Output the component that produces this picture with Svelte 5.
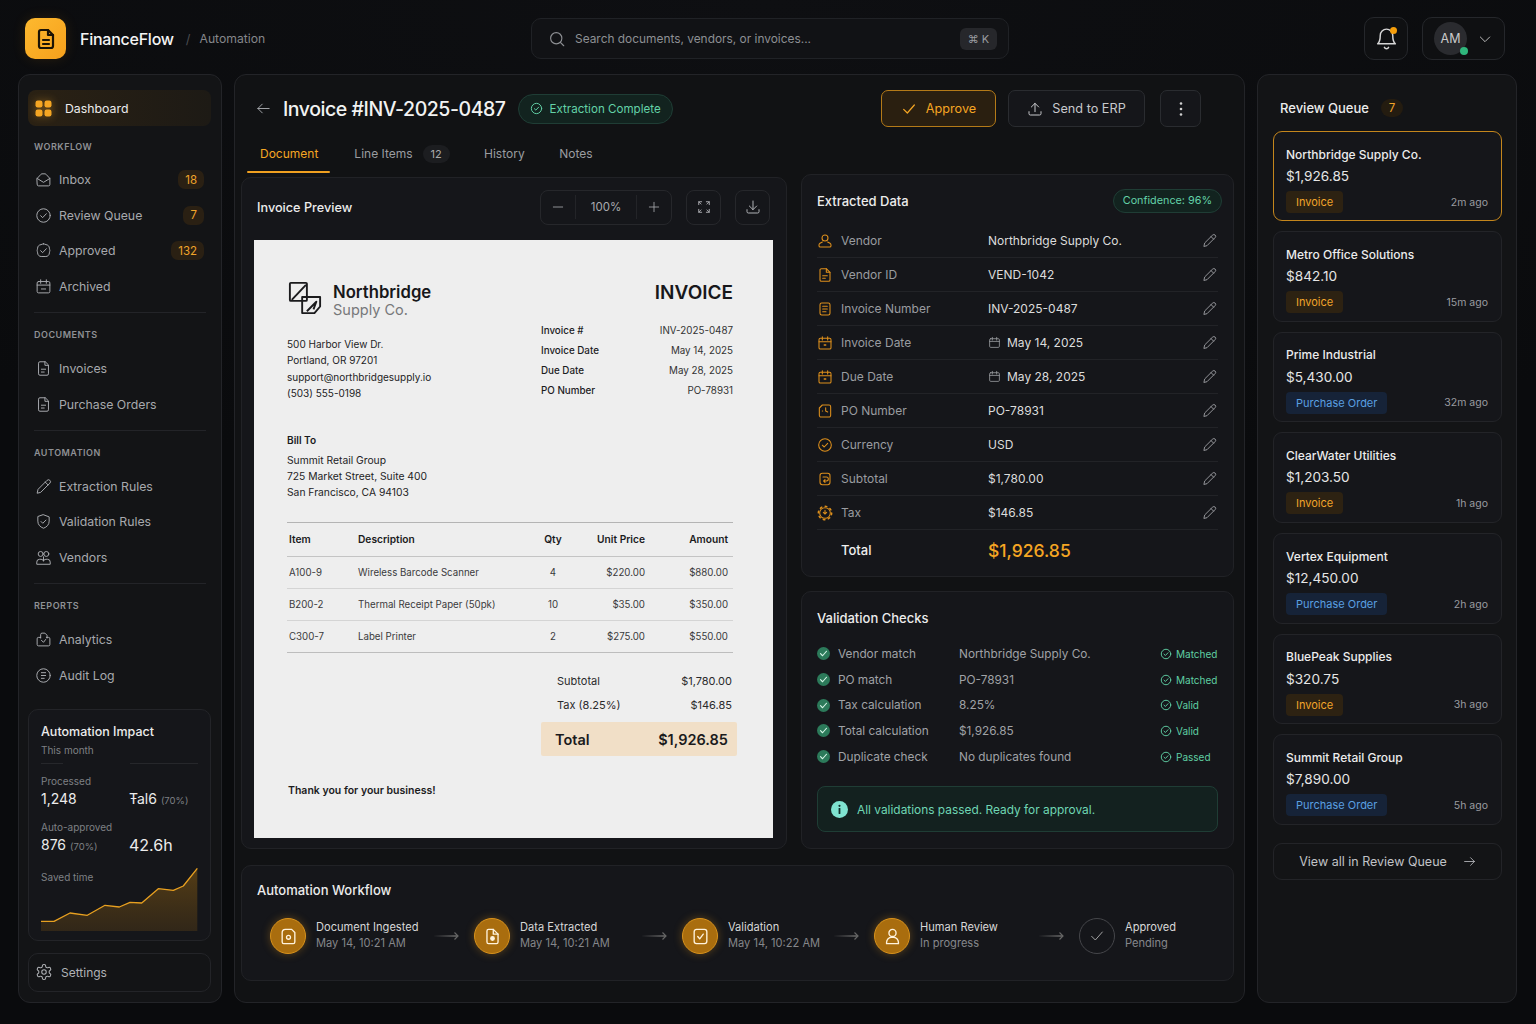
<script lang="ts">
  const icons: Record<string, string> = {
    doc: '<path d="M14 3H7a2 2 0 0 0-2 2v14a2 2 0 0 0 2 2h10a2 2 0 0 0 2-2V8z"/><path d="M14 3v5h5"/><path d="M9 13h6M9 17h6"/>',
    inbox: '<path d="M3 10.5 8.5 4.6a2 2 0 0 1 1.4-.6h4.200a2 2 0 0 1 1.400.6L21 10.500V19a2 2 0 0 1-2 2H5a2 2 0 0 1-2-2z"/><path d="m3 10.500 9 5.500 9-5.500"/>',
    circleCheck: '<circle cx="12" cy="12" r="9.500"/><path d="m8 12.300 2.800 2.700L16 9.500"/>',
    badge: '<path d="M12 2.500c1.500 0 2 1 3.500 1.200 2.800.3 4.800 2.300 4.800 5 0 1.400.7 2 .7 3.300s-.7 2-.7 3.300c0 3-2.300 5.200-5 5.200H8.700c-2.700 0-5-2.200-5-5.200 0-1.300-.7-2-.7-3.300s.7-1.900.7-3.300c0-2.700 2-4.700 4.800-5C10 3.500 10.500 2.500 12 2.500z"/><path d="m8 12.300 2.800 2.700L16 9.500"/>',
    calendar: '<rect x="3" y="5" width="18" height="16" rx="2"/><path d="M8 2.500v5M16 2.500v5M3 10h18"/>',
    calDot: '<rect x="3" y="5" width="18" height="16" rx="2"/><path d="M8 2.500v5M16 2.500v5M3 10h18"/><path d="M11 15h2" stroke-width="2.400"/>',
    archive: '<rect x="3" y="5" width="18" height="16" rx="2"/><path d="M8 2.500v5M16 2.500v5M3 10h18M9 15.500h6"/>',
    file: '<path d="M14 2.500H7a2 2 0 0 0-2 2v15a2 2 0 0 0 2 2h10a2 2 0 0 0 2-2V7.500z"/><path d="M14 2.500v5h5"/><path d="M9 13h6M9 17h4"/>',
    lines: '<rect x="4.500" y="3" width="15" height="18" rx="2.500"/><path d="M8.500 8h7M8.500 12h7M8.500 16h5"/>',
    pencil: '<path d="M17 3.300a2.800 2.800 0 0 1 4 4L8 20.300 3 21.500l1.200-5z"/><path d="m14.500 5.800 4 4"/>',
    shield: '<path d="M12 2.500 20 5.500v6c0 5-3.400 8.300-8 10-4.600-1.700-8-5-8-10v-6z"/><path d="m8.500 12 2.500 2.500 4.500-4.500"/>',
    users: '<circle cx="8" cy="7" r="3.500"/><circle cx="16" cy="7" r="3.500"/><path d="M2.500 21v-2.500a4 4 0 0 1 4-4h2a3.500 3.500 0 0 1 3.500 2.500 3.500 3.500 0 0 1 3.500-2.500h2a4 4 0 0 1 4 4V21z"/><path d="M12 11v6"/>',
    analytics: '<path d="M8 10V5a2 2 0 0 1 2-2h4l3 3v4"/><path d="M8 9H5a2 2 0 0 0-2 2v8a2 2 0 0 0 2 2h14a2 2 0 0 0 2-2v-8a2 2 0 0 0-2-2h-3"/><path d="m9 13 3 3 3-4"/>',
    audit: '<circle cx="12" cy="12" r="9.500"/><path d="M9 8h6M9 12h6M9 16h4"/>',
    gear: '<path d="M12.220 2h-.44a2 2 0 0 0-2 2v.18a2 2 0 0 1-1 1.730l-.43.25a2 2 0 0 1-2 0l-.15-.08a2 2 0 0 0-2.730.73l-.22.38a2 2 0 0 0 .73 2.730l.15.1a2 2 0 0 1 1 1.720v.51a2 2 0 0 1-1 1.740l-.15.09a2 2 0 0 0-.73 2.730l.22.38a2 2 0 0 0 2.730.73l.15-.08a2 2 0 0 1 2 0l.43.25a2 2 0 0 1 1 1.730V20a2 2 0 0 0 2 2h.44a2 2 0 0 0 2-2v-.18a2 2 0 0 1 1-1.730l.43-.25a2 2 0 0 1 2 0l.15.08a2 2 0 0 0 2.730-.73l.22-.39a2 2 0 0 0-.73-2.730l-.15-.08a2 2 0 0 1-1-1.740v-.5a2 2 0 0 1 1-1.740l.15-.09a2 2 0 0 0 .73-2.730l-.22-.38a2 2 0 0 0-2.730-.73l-.15.08a2 2 0 0 1-2 0l-.43-.25a2 2 0 0 1-1-1.730V4a2 2 0 0 0-2-2z"/><circle cx="12" cy="12" r="3"/>',
    search: '<circle cx="11" cy="11" r="7.500"/><path d="m21 21-4.500-4.500"/>',
    bell: '<path d="M6 9a6 6 0 0 1 12 0c0 6 2.500 8 2.500 8h-17S6 15 6 9"/><path d="M10 20.500a2.200 2.200 0 0 0 4 0"/>',
    chevron: '<path d="m5 9 7 7 7-7"/>',
    arrowLeft: '<path d="M21 12H3M10 5l-7 7 7 7"/>',
    arrowRight: '<path d="M3 12h18M14 5l7 7-7 7"/>',
    check: '<path d="m4 12.500 5.500 5.500L20 6"/>',
    upload: '<path d="M12 16V3.500M6.500 9 12 3.500 17.500 9M3 16v3a2 2 0 0 0 2 2h14a2 2 0 0 0 2-2v-3"/>',
    download: '<path d="M12 3v13M6.500 10.500 12 16l5.500-5.500M3 16v3a2 2 0 0 0 2 2h14a2 2 0 0 0 2-2v-3"/>',
    minus: '<path d="M4 12h16"/>',
    plus: '<path d="M12 4v16M4 12h16"/>',
    expand: '<path d="M3 8V3h5M16 3h5v5M21 16v5h-5M8 21H3v-5"/><path d="m3 3 4 4M21 3l-4 4M21 21l-4-4M3 21l4-4" stroke-width="1.400"/>',
    po: '<path d="M8 3h10a2.500 2.500 0 0 1 2.500 2.500v13a2.500 2.500 0 0 1-2.500 2.500H6a2.500 2.500 0 0 1-2.500-2.500V7.500z"/><path d="M13 7v5l3 1.500M8 12h.5"/>',
    sub: '<rect x="4.500" y="3.500" width="15" height="17" rx="3.500"/><path d="M9 9h5a2 2 0 0 1 0 6h-3M12 13l-2 2 2 2"/>',
    tax: '<circle cx="12" cy="12" r="8" /><circle cx="12" cy="12" r="10" stroke-dasharray="2.500 5.350" stroke-width="2.200"/><path d="M12 8v5M9.500 11l2.500 2.500 2.500-2.500"/>',
    vendor: '<circle cx="12" cy="7.500" r="4.500"/><path d="M8 13.500 4.500 15.500A3 3 0 0 0 3 18v1a2 2 0 0 0 2 2h14a2 2 0 0 0 2-2v-1a3 3 0 0 0-1.500-2.500L16 13.500"/>',
    vendorId: '<path d="M14 2.500H6.500a2 2 0 0 0-2 2v15a2 2 0 0 0 2 2h11a2 2 0 0 0 2-2V8z"/><path d="M14 2.500V8h5.500"/><path d="M8.500 13h7M8.500 17h4"/>',
    ingest: '<path d="M8 3h8l4 4v12a2 2 0 0 1-2 2H6a2 2 0 0 1-2-2V7a4 4 0 0 1 4-4z"/><circle cx="12" cy="13" r="2.500"/>',
    extract: '<path d="M13 3H7a2 2 0 0 0-2 2v14a2 2 0 0 0 2 2h10a2 2 0 0 0 2-2V9z"/><path d="M13 3v6h6"/><circle cx="12" cy="14.500" r="2.200" fill="currentColor"/>',
    validate: '<rect x="4" y="3" width="16" height="18" rx="3"/><path d="m8.500 12 2.500 3 4.500-6"/>',
    person: '<circle cx="12" cy="7.500" r="4.500"/><path d="M4.500 21v-1.500a6.500 6.500 0 0 1 6.500-6.500h2a6.500 6.500 0 0 1 6.500 6.500V21z"/>',
  };

  const sections = [
    {
      label: 'WORKFLOW',
      items: [
        { name: 'Inbox', icon: 'inbox', count: 18 },
        { name: 'Review Queue', icon: 'circleCheck', count: 7 },
        { name: 'Approved', icon: 'badge', count: 132 },
        { name: 'Archived', icon: 'archive' },
      ],
    },
    { label: 'DOCUMENTS', items: [{ name: 'Invoices', icon: 'file' }, { name: 'Purchase Orders', icon: 'file' }] },
    {
      label: 'AUTOMATION',
      items: [
        { name: 'Extraction Rules', icon: 'pencil' },
        { name: 'Validation Rules', icon: 'shield' },
        { name: 'Vendors', icon: 'users' },
      ],
    },
    { label: 'REPORTS', items: [{ name: 'Analytics', icon: 'analytics' }, { name: 'Audit Log', icon: 'audit' }] },
  ];

  const fields = [
    { label: 'Vendor', value: 'Northbridge Supply Co.', icon: 'vendor' },
    { label: 'Vendor ID', value: 'VEND-1042', icon: 'vendorId' },
    { label: 'Invoice Number', value: 'INV-2025-0487', icon: 'lines' },
    { label: 'Invoice Date', value: 'May 14, 2025', icon: 'calDot', date: true },
    { label: 'Due Date', value: 'May 28, 2025', icon: 'calDot', date: true },
    { label: 'PO Number', value: 'PO-78931', icon: 'po' },
    { label: 'Currency', value: 'USD', icon: 'circleCheck' },
    { label: 'Subtotal', value: '$1,780.00', icon: 'sub' },
    { label: 'Tax', value: '$146.85', icon: 'tax' },
  ];

  const checks = [
    ['Vendor match', 'Northbridge Supply Co.', 'Matched'],
    ['PO match', 'PO-78931', 'Matched'],
    ['Tax calculation', '8.25%', 'Valid'],
    ['Total calculation', '$1,926.85', 'Valid'],
    ['Duplicate check', 'No duplicates found', 'Passed'],
  ];

  const lineItems = [
    ['A100-9', 'Wireless Barcode Scanner', '4', '$220.00', '$880.00'],
    ['B200-2', 'Thermal Receipt Paper (50pk)', '10', '$35.00', '$350.00'],
    ['C300-7', 'Label Printer', '2', '$275.00', '$550.00'],
  ];

  const meta = [
    ['Invoice #', 'INV-2025-0487'],
    ['Invoice Date', 'May 14, 2025'],
    ['Due Date', 'May 28, 2025'],
    ['PO Number', 'PO-78931'],
  ];

  const steps = [
    { title: 'Document Ingested', sub: 'May 14, 10:21 AM', icon: 'ingest', w: 204 },
    { title: 'Data Extracted', sub: 'May 14, 10:21 AM', icon: 'extract', w: 208 },
    { title: 'Validation', sub: 'May 14, 10:22 AM', icon: 'validate', w: 192 },
    { title: 'Human Review', sub: 'In progress', icon: 'person', w: 205 },
    { title: 'Approved', sub: 'Pending', icon: 'check', pending: true, w: 130 },
  ];

  const queue = [
    { name: 'Northbridge Supply Co.', amount: '$1,926.85', type: 'Invoice', time: '2m ago', active: true },
    { name: 'Metro Office Solutions', amount: '$842.10', type: 'Invoice', time: '15m ago' },
    { name: 'Prime Industrial', amount: '$5,430.00', type: 'Purchase Order', time: '32m ago' },
    { name: 'ClearWater Utilities', amount: '$1,203.50', type: 'Invoice', time: '1h ago' },
    { name: 'Vertex Equipment', amount: '$12,450.00', type: 'Purchase Order', time: '2h ago' },
    { name: 'BluePeak Supplies', amount: '$320.75', type: 'Invoice', time: '3h ago' },
    { name: 'Summit Retail Group', amount: '$7,890.00', type: 'Purchase Order', time: '5h ago' },
  ];

  // sparkline, in px of the 157x65 box
  const spark = [
    [0, 54.3], [13, 54.3], [29, 46], [46.3, 48.3], [64, 38.3], [78.3, 40], [89, 35.3],
    [100.700, 36], [117.3, 21.7], [132.3, 23.3], [142.3, 19], [156.3, 1.3],
  ];
  const sparkLine = spark.map((p, i) => `${i === 0 ? 'M' : 'L'}${p[0]},${p[1]}`).join(' ');
  const sparkArea = `${sparkLine} L156.3,64 L0,64 Z`;
</script>

{#snippet ic(name: string, size: number = 16, sw: number = 1.7)}
  <svg class="ic" width={size} height={size} viewBox="0 0 24 24" fill="none" stroke="currentColor" stroke-width={sw} stroke-linecap="round" stroke-linejoin="round" aria-hidden="true">{@html icons[name]}</svg>
{/snippet}

<div class="app">
  <header class="topbar">
    <div class="brand">
      <div class="logo">{@render ic('doc', 24, 2.2)}</div>
      <span class="brand-name">FinanceFlow</span>
      <span class="slash">/</span>
      <span class="crumb">Automation</span>
    </div>
    <div class="search">
      {@render ic('search', 18, 1.5)}
      <span class="search-text">Search documents, vendors, or invoices...</span>
      <span class="kbd">⌘ K</span>
    </div>
    <div class="top-right">
      <button class="bell">
        {@render ic('bell', 25, 1.4)}
        <span class="bell-dot"></span>
      </button>
      <button class="profile">
        <span class="avatar">AM<span class="online"></span></span>
        {@render ic('chevron', 16, 1.5)}
      </button>
    </div>
  </header>

  <div class="layout">
    <aside class="sidebar">
      <div class="dash">
        <svg class="dash-ic" width="17" height="17" viewBox="0 0 17 17" aria-hidden="true">
          <rect x="0.500" y="0.500" width="7" height="7" rx="2.200" />
          <rect x="9.500" y="0.500" width="7" height="7" rx="2.200" />
          <rect x="0.500" y="9.500" width="7" height="7" rx="2.200" />
          <rect x="9.500" y="9.500" width="7" height="7" rx="2.200" />
        </svg>
        <span>Dashboard</span>
      </div>
      {#each sections as s, i}
        <div class="sec-label" class:first={i === 0}>{s.label}</div>
        {#each s.items as it}
          <div class="nav-item">
            {@render ic(it.icon, 17, 1.4)}
            <span>{it.name}</span>
            {#if it.count}<em class="count">{it.count}</em>{/if}
          </div>
        {/each}
        {#if i < sections.length - 1}<div class="nav-div"></div>{/if}
      {/each}

      <div class="impact">
        <div class="impact-title">Automation Impact</div>
        <div class="impact-sub">This month</div>
        <div class="impact-rule"><i></i><i></i></div>
        <div class="impact-grid">
          <div>
            <div class="stat-label">Processed</div>
            <div class="stat">1,248</div>
          </div>
          <div>
            <div class="stat-label">&nbsp;</div>
            <div class="stat">Ŧal6 <small>(70%)</small></div>
          </div>
          <div class="row2">
            <div class="stat-label">Auto-approved</div>
            <div class="stat">876 <small>(70%)</small></div>
          </div>
          <div class="row2">
            <div class="stat-label">&nbsp;</div>
            <div class="stat big">42.6h</div>
          </div>
        </div>
        <div class="chart">
          <span class="chart-label">Saved time</span>
          <svg width="157" height="65" viewBox="0 0 157 65" aria-hidden="true">
            <defs>
              <linearGradient id="sparkFill" x1="0" y1="0" x2="0" y2="1">
                <stop offset="0" stop-color="#8a5e12" stop-opacity="0.55" />
                <stop offset="1" stop-color="#5c4016" stop-opacity="0.4" />
              </linearGradient>
            </defs>
            <path d={sparkArea} fill="url(#sparkFill)" />
            <path d={sparkLine} fill="none" stroke="#e8a020" stroke-width="1.300" stroke-linejoin="round" />
          </svg>
        </div>
      </div>

      <div class="settings">
        {@render ic('gear', 18, 1.4)}
        <span>Settings</span>
      </div>
    </aside>

    <main class="main">
      <div class="head">
        <span class="back">{@render ic('arrowLeft', 15, 1.5)}</span>
        <h1>Invoice #INV-2025-0487</h1>
        <span class="status">{@render ic('circleCheck', 13, 1.8)}Extraction Complete</span>
        <div class="actions">
          <button class="btn approve">{@render ic('check', 16, 1.8)}Approve</button>
          <button class="btn send">{@render ic('upload', 16, 1.5)}Send to ERP</button>
          <button class="btn more" aria-label="More">
            <svg width="4" height="16" viewBox="0 0 4 16" aria-hidden="true"><circle cx="2" cy="2.500" r="1.300" /><circle cx="2" cy="8" r="1.300" /><circle cx="2" cy="13.500" r="1.300" /></svg>
          </button>
        </div>
      </div>

      <nav class="tabs">
        <span class="tab active">Document</span>
        <span class="tab">Line Items <em>12</em></span>
        <span class="tab">History</span>
        <span class="tab">Notes</span>
      </nav>

      <div class="columns">
        <section class="panel preview">
          <div class="preview-head">
            <h2>Invoice Preview</h2>
            <div class="zoom">
              <span class="zoom-btn">{@render ic('minus', 14, 1.4)}</span>
              <span class="zoom-val">100%</span>
              <span class="zoom-btn">{@render ic('plus', 14, 1.4)}</span>
            </div>
            <span class="tool fs">{@render ic('expand', 14, 1.6)}</span>
            <span class="tool">{@render ic('download', 16, 1.5)}</span>
          </div>

          <div class="paper">
            <div class="paper-top">
              <div>
                <div class="nb">
                  <svg class="nb-mark" width="34" height="34" viewBox="0 0 36 36" fill="none" stroke="#1b1b1d" stroke-width="2" stroke-linejoin="round" aria-hidden="true">
                    <rect x="2" y="2" width="18" height="19" rx="1" />
                    <path d="M4 20 19 4" />
                    <path d="M15 17v17h13l6-7V17z" />
                    <path d="M20 32 30 22l-3 8" />
                  </svg>
                  <div class="nb-text">
                    <div class="nb-1">Northbridge</div>
                    <div class="nb-2">Supply Co.</div>
                  </div>
                </div>
                <div class="addr">
                  <div>500 Harbor View Dr.</div>
                  <div>Portland, OR 97201</div>
                  <div>support@northbridgesupply.io</div>
                  <div>(503) 555-0198</div>
                </div>
              </div>
              <div>
                <div class="inv-word">INVOICE</div>
                <div class="meta">
                  {#each meta as m}
                    <div class="meta-row"><b>{m[0]}</b><span>{m[1]}</span></div>
                  {/each}
                </div>
              </div>
            </div>

            <div class="bill-label">Bill To</div>
            <div class="bill">
              <div>Summit Retail Group</div>
              <div>725 Market Street, Suite 400</div>
              <div>San Francisco, CA 94103</div>
            </div>

            <table>
              <thead>
                <tr>
                  <th class="c-item">Item</th>
                  <th class="c-desc">Description</th>
                  <th class="c-qty">Qty</th>
                  <th class="c-price">Unit Price</th>
                  <th class="c-amt">Amount</th>
                </tr>
              </thead>
              <tbody>
                {#each lineItems as r}
                  <tr>
                    <td class="c-item">{r[0]}</td>
                    <td class="c-desc">{r[1]}</td>
                    <td class="c-qty">{r[2]}</td>
                    <td class="c-price">{r[3]}</td>
                    <td class="c-amt">{r[4]}</td>
                  </tr>
                {/each}
              </tbody>
            </table>

            <div class="totals">
              <div class="t-row"><span>Subtotal</span><span>$1,780.00</span></div>
              <div class="t-row"><span>Tax (8.25%)</span><span>$146.85</span></div>
              <div class="t-total"><span>Total</span><span>$1,926.85</span></div>
            </div>
            <div class="thanks">Thank you for your business!</div>
          </div>
        </section>

        <div class="right-col">
          <section class="panel extracted">
            <div class="ex-head">
              <h2>Extracted Data</h2>
              <span class="conf">Confidence: 96%</span>
            </div>
            {#each fields as f}
              <div class="field">
                <span class="f-ic">{@render ic(f.icon, 16, 1.6)}</span>
                <span class="f-label">{f.label}</span>
                <span class="f-value">
                  {#if f.date}<span class="f-cal">{@render ic('calendar', 13, 1.5)}</span>{/if}
                  {f.value}
                </span>
                <span class="f-edit">{@render ic('pencil', 15, 1.4)}</span>
              </div>
            {/each}
            <div class="field total">
              <span class="f-ic"></span>
              <span class="f-label">Total</span>
              <span class="f-value">$1,926.85</span>
            </div>
          </section>

          <section class="panel validation">
            <h2>Validation Checks</h2>
            <div class="checks">
              {#each checks as c}
                <div class="check">
                  <span class="c-dot">{@render ic('check', 9, 3)}</span>
                  <span class="c-label">{c[0]}</span>
                  <span class="c-value">{c[1]}</span>
                  <span class="c-status">{@render ic('circleCheck', 12, 1.9)}{c[2]}</span>
                </div>
              {/each}
            </div>
            <div class="passed">
              <svg width="17" height="17" viewBox="0 0 17 17" aria-hidden="true">
                <circle cx="8.500" cy="8.500" r="8.500" fill="#7fe3d0" />
                <rect x="7.600" y="7" width="1.800" height="6" rx="0.600" fill="#12312c" />
                <circle cx="8.500" cy="4.800" r="1.100" fill="#12312c" />
              </svg>
              All validations passed. Ready for approval.
            </div>
          </section>
        </div>
      </div>

      <section class="panel workflow">
        <h2>Automation Workflow</h2>
        <div class="steps">
          {#each steps as s, i}
            <div class="step" style="width:{s.w}px">
              <span class="step-ic" class:pending={s.pending}>{@render ic(s.icon, s.pending ? 16 : 19, s.pending ? 1.3 : 1.7)}</span>
              <div class="step-text">
                <div class="step-title">{s.title}</div>
                <div class="step-sub">{s.sub}</div>
              </div>
              {#if i < steps.length - 1}
                <svg class="flow-arrow" width="26" height="10" viewBox="0 0 26 10" fill="none" aria-hidden="true">
                  <defs>
                    <linearGradient id="flowFade{i}" gradientUnits="userSpaceOnUse" x1="0" y1="0" x2="26" y2="0"><stop offset="0" stop-color="#666" stop-opacity="0" /><stop offset="1" stop-color="#666" /></linearGradient>
                  </defs>
                  <path d="M1 5h24" stroke="url(#flowFade{i})" stroke-width="1.800" />
                  <path d="m21.500 1.500 3.500 3.500-3.500 3.500" stroke="#666" stroke-width="1.200" />
                </svg>
              {/if}
            </div>
          {/each}
        </div>
      </section>
    </main>

    <aside class="queue">
      <div class="q-head">
        <h2>Review Queue</h2>
        <em>7</em>
      </div>
      <div class="q-list">
        {#each queue as q}
          <div class="q-card" class:active={q.active}>
            <div class="q-name">{q.name}</div>
            <div class="q-amt">{q.amount}</div>
            <div class="q-foot">
              <span class="pill" class:po={q.type !== 'Invoice'}>{q.type}</span>
              <span class="q-time">{q.time}</span>
            </div>
          </div>
        {/each}
      </div>
      <div class="view-all">View all in Review Queue {@render ic('arrowRight', 13, 1.5)}</div>
    </aside>
  </div>
</div>

<style>
  :global(body) { background: #0b0c0e; }
  .app { width: 1536px; height: 1024px; overflow: hidden; background: radial-gradient(1200px 500px at 50% 0, #0e0f12, #0a0b0d); color: #e6e6e6; font-family: Inter, "Noto Sans", sans-serif; font-size: 12.300px; }
  h1, h2 { margin: 0; font-weight: 500; }
  em { font-style: normal; }
  button { font-family: inherit; background: none; color: inherit; cursor: pointer; padding: 0; }
  .ic { flex: none; display: block; }

  .topbar { height: 74px; display: grid; grid-template-columns: 506px 478px 1fr; align-items: center; padding: 3px 31px 0 25px; box-sizing: border-box; }
  .brand { display: flex; align-items: center; }
  .logo { width: 41px; height: 41px; border-radius: 10px; background: linear-gradient(135deg, #fdb92f, #f6a01c); color: #1b1305; display: flex; align-items: center; justify-content: center; box-shadow: 0 0 14px rgba(245, 158, 11, 0.12); }
  .brand-name { font-size: 16px; letter-spacing: -0.25px; font-weight: 500; color: #f4f4f4; margin-left: 14px; }
  .slash { color: #4a4b4f; margin-left: 12px; font-size: 13px; }
  .crumb { color: #85878b; margin-left: 9px; font-size: 12.200px; }
  .search { height: 41px; display: flex; align-items: center; gap: 9px; padding: 0 11px 0 16px; background: #111215; border: 1px solid #202226; border-radius: 10px; color: #8d8f93; box-sizing: border-box; }
  .search-text { flex: 1; font-size: 11.900px; }
  .kbd { background: #26272b; color: #9a9ca0; border-radius: 6px; height: 22px; width: 37px; display: flex; align-items: center; justify-content: center; font-size: 11px; }
  .top-right { display: flex; justify-content: flex-end; gap: 14px; }
  .bell { position: relative; width: 44px; height: 43px; border: 1px solid #25272b; border-radius: 10px; display: flex; align-items: center; justify-content: center; color: #d6d6d6; background: #0f1012; }
  .bell-dot { position: absolute; top: 9px; right: 10px; width: 7px; height: 7px; border-radius: 50%; background: #f59e0b; }
  .profile { width: 83px; height: 43px; border: 1px solid #25272b; border-radius: 10px; display: flex; align-items: center; gap: 10px; padding-left: 11px; box-sizing: border-box; background: #0f1012; color: #b9b9b9; }
  .avatar { position: relative; width: 33px; height: 33px; border-radius: 50%; background: #2a2b2f; color: #c9c9c9; font-size: 12.500px; display: flex; align-items: center; justify-content: center; }
  .online { position: absolute; right: -1px; bottom: 0; width: 8px; height: 8px; border-radius: 50%; background: #2fb67c; }

  .layout { display: grid; grid-template-columns: 204px 1011px 260px; grid-template-rows: 929px; gap: 12px; padding-left: 18px; height: 929px; }
  .sidebar, .main, .queue { background: #131416; border: 1px solid #232428; border-radius: 12px; box-sizing: border-box; }

  .sidebar { padding: 15px 10px 10px 9px; }
  .dash { height: 36px; border-radius: 8px; background: linear-gradient(90deg, #2a2114, #1d1a15); display: flex; align-items: center; gap: 13px; padding-left: 7px; color: #ececec; }
  .dash-ic { fill: #f5a623; filter: drop-shadow(0 0 4px rgba(245, 166, 35, 0.45)); }
  .sec-label { font-size: 9px; font-weight: 600; letter-spacing: 0.500px; color: #8f9195; line-height: 12px; margin: 15.800px 0 10px 6px; }
  .sec-label.first { margin-top: 15px; margin-bottom: 9px; }
  .nav-item { height: 35.500px; display: flex; align-items: center; gap: 7px; padding-left: 7px; color: #a7a9ad; }
  .count { margin-left: auto; margin-right: 7px; height: 19px; padding: 0 7px; border-radius: 7px; background: #2a2013; color: #f0a42a; font-size: 11.500px; display: flex; align-items: center; }
  .nav-div { height: 1px; background: #232428; margin: 8px 5px 0 6px; }

  .impact { margin-top: 16px; height: 232px; box-sizing: border-box; border: 1px solid #232428; border-radius: 10px; padding: 14px 12px 0; background: #15161a; }
  .impact-title { font-weight: 500; color: #ececec; font-size: 12.500px; line-height: 16px; }
  .impact-sub { color: #7e8084; font-size: 10px; line-height: 14px; margin-top: 3px; }
  .impact-rule { display: grid; grid-template-columns: 22px 68px; justify-content: space-between; margin-top: 6px; }
  .impact-rule i { height: 1px; background: #26272b; }
  .impact-grid { display: grid; grid-template-columns: 88px 1fr; margin-top: 10px; }
  .row2 { margin-top: 8px; }
  .stat-label { color: #7e8084; font-size: 10px; line-height: 14px; }
  .stat { color: #ececec; font-size: 14px; line-height: 22px; white-space: nowrap; }
  .stat.big { font-size: 16px; }
  .stat small { color: #7e8084; font-size: 9.500px; }
  .chart { position: relative; margin-top: 9px; height: 65px; }
  .chart svg { display: block; }
  .chart-label { position: absolute; left: 0; top: 3px; color: #7e8084; font-size: 10px; line-height: 14px; }
  .settings { margin-top: 12px; height: 39px; border: 1px solid #232428; border-radius: 10px; display: flex; align-items: center; gap: 8px; padding-left: 6px; color: #b0b2b6; font-size: 12px; box-sizing: border-box; }

  .main { padding: 15px 10px 0 6px; background: #111214; }
  .head { height: 37px; display: flex; align-items: center; }
  .back { color: #a9abaf; margin-left: 15px; margin-right: 12px; }
  .head h1 { font-size: 19.500px; letter-spacing: -0.450px; color: #f2f2f2; white-space: nowrap; }
  .status { display: flex; align-items: center; gap: 7px; height: 30px; box-sizing: border-box; margin-left: 12px; padding: 0 11px; border-radius: 15px; background: #12231f; border: 1px solid #1f3d35; color: #63d2a8; font-size: 11.600px; }
  .actions { margin-left: auto; display: flex; gap: 12px; margin-right: 33px; }
  .btn { height: 37px; border-radius: 7px; border: 1px solid #2a2c30; background: #15161a; display: flex; align-items: center; justify-content: center; font-size: 12.700px; color: #c8c9cc; gap: 9px; box-sizing: border-box; }
  .approve { width: 115px; background: #2a1f10; border-color: #b47a18; color: #f5a623; }
  .send { width: 137px; }
  .more { width: 41px; margin-left: 3px; }
  .more svg { fill: #d0d0d0; }

  .tabs { display: flex; height: 39px; margin-top: 8px; align-items: center; padding: 0 0 2px 19px; box-sizing: border-box; position: relative; font-size: 12px; }
  .tab { color: #9a9ca0; display: flex; align-items: center; gap: 10px; height: 100%; margin-right: 34.500px; }
  .tab em { height: 18px; width: 27px; border-radius: 9px; background: #1c1d20; display: flex; align-items: center; justify-content: center; font-size: 11px; color: #aaa; }
  .tab.active { color: #f5a623; position: relative; margin-right: 36px; }
  .tab.active::after { content: ""; position: absolute; left: -13px; right: -12px; bottom: -1px; height: 2px; background: #f0a020; border-radius: 1px; }

  .panel { background: #15161a; border: 1px solid #212226; border-radius: 10px; box-sizing: border-box; }
  h2 { font-size: 13px; color: #ececec; }
  .columns { display: grid; grid-template-columns: 546px 433px; gap: 14px; height: 675px; }

  .preview { margin-top: 3px; height: 672px; padding: 11px 13px 10px 12px; }
  .preview-head { height: 36px; display: flex; align-items: center; gap: 14px; margin-bottom: 15px; padding-right: 3px; }
  .preview-head h2 { flex: 1; margin-left: 3px; font-size: 12.700px; }
  .zoom { width: 132px; height: 35px; box-sizing: border-box; border: 1px solid #26272b; border-radius: 8px; display: grid; grid-template-columns: 34px 1fr 34px; align-items: center; color: #a9abaf; }
  .zoom-btn { display: flex; justify-content: center; }
  .zoom-val { font-size: 11.500px; text-align: center; border-left: 1px solid #232428; border-right: 1px solid #232428; line-height: 24px; }
  .tool { width: 35px; height: 35px; box-sizing: border-box; border: 1px solid #26272b; border-radius: 8px; display: flex; align-items: center; justify-content: center; color: #b0b2b6; }

  .paper { width: 519px; height: 598px; box-sizing: border-box; padding: 41px 40px 0 33px; background: #eeeeee; color: #232325; font-size: 9.800px; }
  .paper-top { display: grid; grid-template-columns: 254px 192px; }
  .nb { display: flex; align-items: flex-start; gap: 11px; }
  .nb-mark { margin-left: 1px; flex: none; }
  .nb-text { margin-top: 1px; }
  .nb-1 { font-size: 16.700px; font-weight: 600; color: #17171a; line-height: 20px; }
  .nb-2 { font-size: 14.500px; color: #77787a; line-height: 15px; }
  .addr { margin-top: 19px; line-height: 16.400px; font-size: 10px; }
  .inv-word { text-align: right; font-size: 19px; font-weight: 600; line-height: 24px; color: #17171a; }
  .meta { margin-top: 15px; }
  .meta-row { display: flex; justify-content: space-between; height: 20px; align-items: center; }
  .meta-row b { font-weight: 500; color: #1c1c1e; }
  .meta-row span { color: #333; }
  .bill-label { font-weight: 600; font-size: 10.100px; line-height: 16px; margin-top: 30px; color: #1b1b1d; }
  .bill { margin-top: 4px; line-height: 16.300px; font-size: 10.300px; }
  table { width: 446px; margin-top: 21px; border-collapse: collapse; table-layout: fixed; border-top: 1px solid #b4b4b4; }
  th { height: 32px; font-weight: 600; font-size: 10.200px; color: #1b1b1d; border-bottom: 1px solid #c4c4c4; padding: 0 0 1px; }
  td { height: 31px; font-size: 9.700px; color: #3a3a3c; border-bottom: 1px solid #d4d4d4; padding: 0; }
  tbody tr:last-child td { border-bottom: 1px solid #bdbdbd; height: 31.500px; }
  .c-item { width: 71px; text-align: left; padding-left: 2px; box-sizing: border-box; }
  .c-desc { width: 172px; text-align: left; }
  .c-qty { width: 46px; text-align: center; }
  .c-price { width: 69px; text-align: right; }
  .c-amt { text-align: right; padding-right: 5px; }
  .totals { margin: 16px -4px 0 254px; }
  .t-row { height: 24px; display: flex; align-items: center; justify-content: space-between; padding: 0 5px 0 16px; font-size: 11px; color: #2a2a2c; }
  .t-total { margin-top: 5px; height: 34px; display: flex; align-items: center; justify-content: space-between; background: #f1dfc7; border-radius: 2px; padding: 0 9px 0 14px; font-size: 14.500px; font-weight: 600; color: #1b1b1d; }
  .thanks { margin: 27px 0 0 1px; font-weight: 600; font-size: 10.500px; line-height: 16px; color: #1b1b1d; }

  .right-col { display: flex; flex-direction: column; gap: 14px; }
  .extracted { height: 403px; padding: 13px 15px 0; font-size: 12px; }
  .ex-head { display: flex; justify-content: space-between; align-items: center; height: 25px; margin: 0 -4px 11px 0; }
  .conf { height: 24px; box-sizing: border-box; padding: 0 9px; display: flex; align-items: center; border-radius: 12px; background: #12231f; border: 1px solid #1f3d35; color: #63d2a8; font-size: 10.800px; }
  .field { height: 34px; box-sizing: border-box; display: grid; grid-template-columns: 24px 147px 1fr 16px; align-items: center; border-bottom: 1px solid #222327; padding-right: 0; }
  .f-ic { color: #dd8f1c; }
  .f-label { color: #9a9ca0; }
  .f-value { color: #dcdcdc; display: flex; align-items: center; gap: 6px; }
  .f-cal { color: #9a9ca0; }
  .f-edit { color: #a3a5a9; }
  .field.total { border: 0; height: 40px; }
  .field.total .f-label { color: #eee; font-weight: 500; font-size: 13px; }
  .field.total .f-value { color: #f5a623; font-size: 17.500px; font-weight: 500; }

  .validation { height: 258px; padding: 18px 15px 0; }
  .checks { margin-top: 15px; }
  .check { height: 25.700px; display: grid; grid-template-columns: 21px 121px 1fr 58px; align-items: center; color: #a0a2a6; font-size: 11.800px; }
  .c-dot { width: 13px; height: 13px; border-radius: 50%; background: #2c7a5a; color: #d7f5e8; display: flex; align-items: center; justify-content: center; }
  .c-status { display: flex; align-items: center; gap: 4px; color: #5fcfa3; font-size: 10px; white-space: nowrap; }
  .passed { margin-top: 17px; height: 46px; border: 1px solid #1f3d35; background: #13211f; border-radius: 8px; display: flex; align-items: center; gap: 9px; padding-left: 13px; color: #6fd6b4; font-size: 11.900px; box-sizing: border-box; }

  .workflow { margin-top: 16px; height: 116px; padding: 16px 15px 0; }
  .steps { display: flex; margin-top: 20px; padding-left: 13px; }
  .step { position: relative; display: flex; align-items: center; gap: 10px; flex: none; }
  .step-ic { width: 36px; height: 36px; box-sizing: border-box; border-radius: 50%; background: #a96d0e; border: 1px solid #d8921c; color: #fff3dd; display: flex; align-items: center; justify-content: center; box-shadow: 0 0 8px rgba(224, 150, 30, 0.35); }
  .step-ic.pending { background: none; border-color: #45464a; box-shadow: none; color: #b8b8b8; }
  .step-text { line-height: 16px; margin-top: -2px; }
  .step-title { font-size: 11.100px; color: #d8d8d8; }
  .step-sub { font-size: 11.100px; color: #85878b; white-space: nowrap; }
  .flow-arrow { position: absolute; right: 15px; top: 50%; margin-top: -5px; }

  .queue { padding: 0 14px 0 15px; }
  .q-head { height: 56px; box-sizing: border-box; padding: 9px 0 0 7px; display: flex; align-items: center; gap: 12px; }
  .q-head em { width: 22px; height: 18px; border-radius: 9px; background: #241c10; color: #f0a42a; font-size: 11.500px; display: flex; align-items: center; justify-content: center; }
  .q-list { display: flex; flex-direction: column; gap: 10px; }
  .q-card { height: 90.700px; box-sizing: border-box; border: 1px solid #232428; border-radius: 9px; padding: 13.500px 13px 0 12px; background: #15161a; }
  .q-card.active { border-color: #c4861c; height: 90px; }
  .q-name { font-weight: 500; font-size: 12px; line-height: 18px; color: #ececec; }
  .q-amt { font-size: 13.600px; line-height: 20px; margin-top: 2.500px; color: #e6e6e6; }
  .q-foot { display: flex; justify-content: space-between; align-items: center; margin-top: 5px; }
  .pill { height: 22px; padding: 0 10px; border-radius: 4px; background: #2d2212; color: #f0a42a; font-size: 11px; display: flex; align-items: center; }
  .pill.po { background: #162338; color: #5a9fe0; }
  .q-time { color: #9a9ca0; font-size: 10.500px; }
  .view-all { margin-top: 18px; height: 37px; border: 1px solid #232428; border-radius: 9px; display: flex; align-items: center; justify-content: center; gap: 16px; color: #c0c2c6; box-sizing: border-box; font-size: 12.500px; }
</style>
